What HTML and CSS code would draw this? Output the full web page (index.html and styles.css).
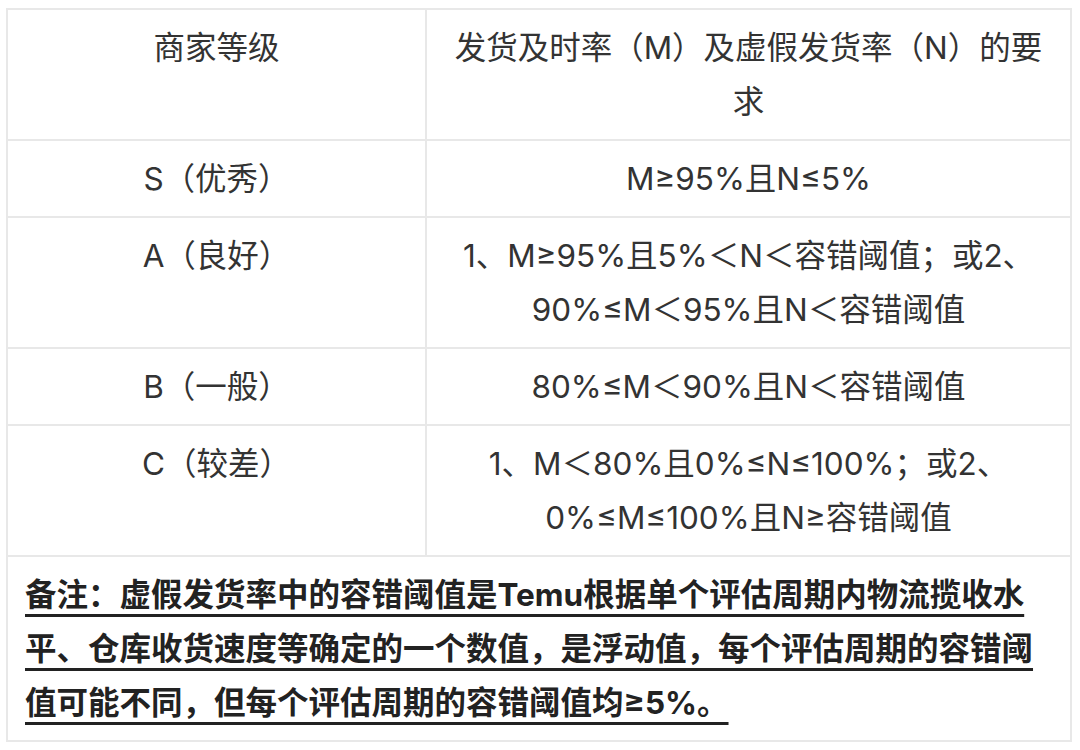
FILE: index.html
```html
<!DOCTYPE html>
<html lang="zh-CN">
<head>
<meta charset="utf-8">
<link rel="stylesheet" href="styles.css">
</head>
<body>
<table class="grade">
  <tr>
    <td class="c1">商家等级</td>
    <td class="c2">发货及时率（M）及虚假发货率（N）的要求</td>
  </tr>
  <tr>
    <td class="c1">S（优秀）</td>
    <td class="c2">M≥95%且N≤5%</td>
  </tr>
  <tr>
    <td class="c1">A（良好）</td>
    <td class="c2">1、M≥95%且5%＜N＜容错阈值；或2、90%≤M＜95%且N＜容错阈值</td>
  </tr>
  <tr>
    <td class="c1">B（一般）</td>
    <td class="c2">80%≤M＜90%且N＜容错阈值</td>
  </tr>
  <tr>
    <td class="c1">C（较差）</td>
    <td class="c2">1、M＜80%且0%≤N≤100%；或2、0%≤M≤100%且N≥容错阈值</td>
  </tr>
  <tr>
    <td class="note" colspan="2"><span class="note-text">备注：虚假发货率中的容错阈值是Temu根据单个评估周期内物流揽收水平、仓库收货速度等确定的一个数值，是浮动值，每个评估周期的容错阈值可能不同，但每个评估周期的容错阈值均≥5%。</span></td>
  </tr>
</table>
</body>
</html>
```

FILE: styles.css
```css
html, body {
  margin: 0;
  padding: 0;
  background: #ffffff;
}

body {
  font-family: "Inter", "Noto Sans CJK SC", sans-serif;
  font-size: 31.5px;
  line-height: 54px;
  color: #333333;
}

.grade {
  margin: 8px 0 0 6px;
  width: 1066px;
  border-collapse: separate;
  border-spacing: 0;
  border-top: 2px solid #e8e8e8;
  border-left: 2px solid #e8e8e8;
  table-layout: fixed;
}

.grade td {
  border-right: 2px solid #e8e8e8;
  border-bottom: 2px solid #e8e8e8;
  padding: 10.5px 20px;
  text-align: center;
  vertical-align: top;
}

.grade td.c1 {
  width: 377px;
}

.grade td.note {
  text-align: left;
  padding-left: 17px;
  font-weight: bold;
  color: #222222;
}

.note-text {
  text-decoration: underline;
  text-decoration-thickness: 3px;
  text-underline-offset: 8px;
  text-decoration-color: #222222;
}
```
